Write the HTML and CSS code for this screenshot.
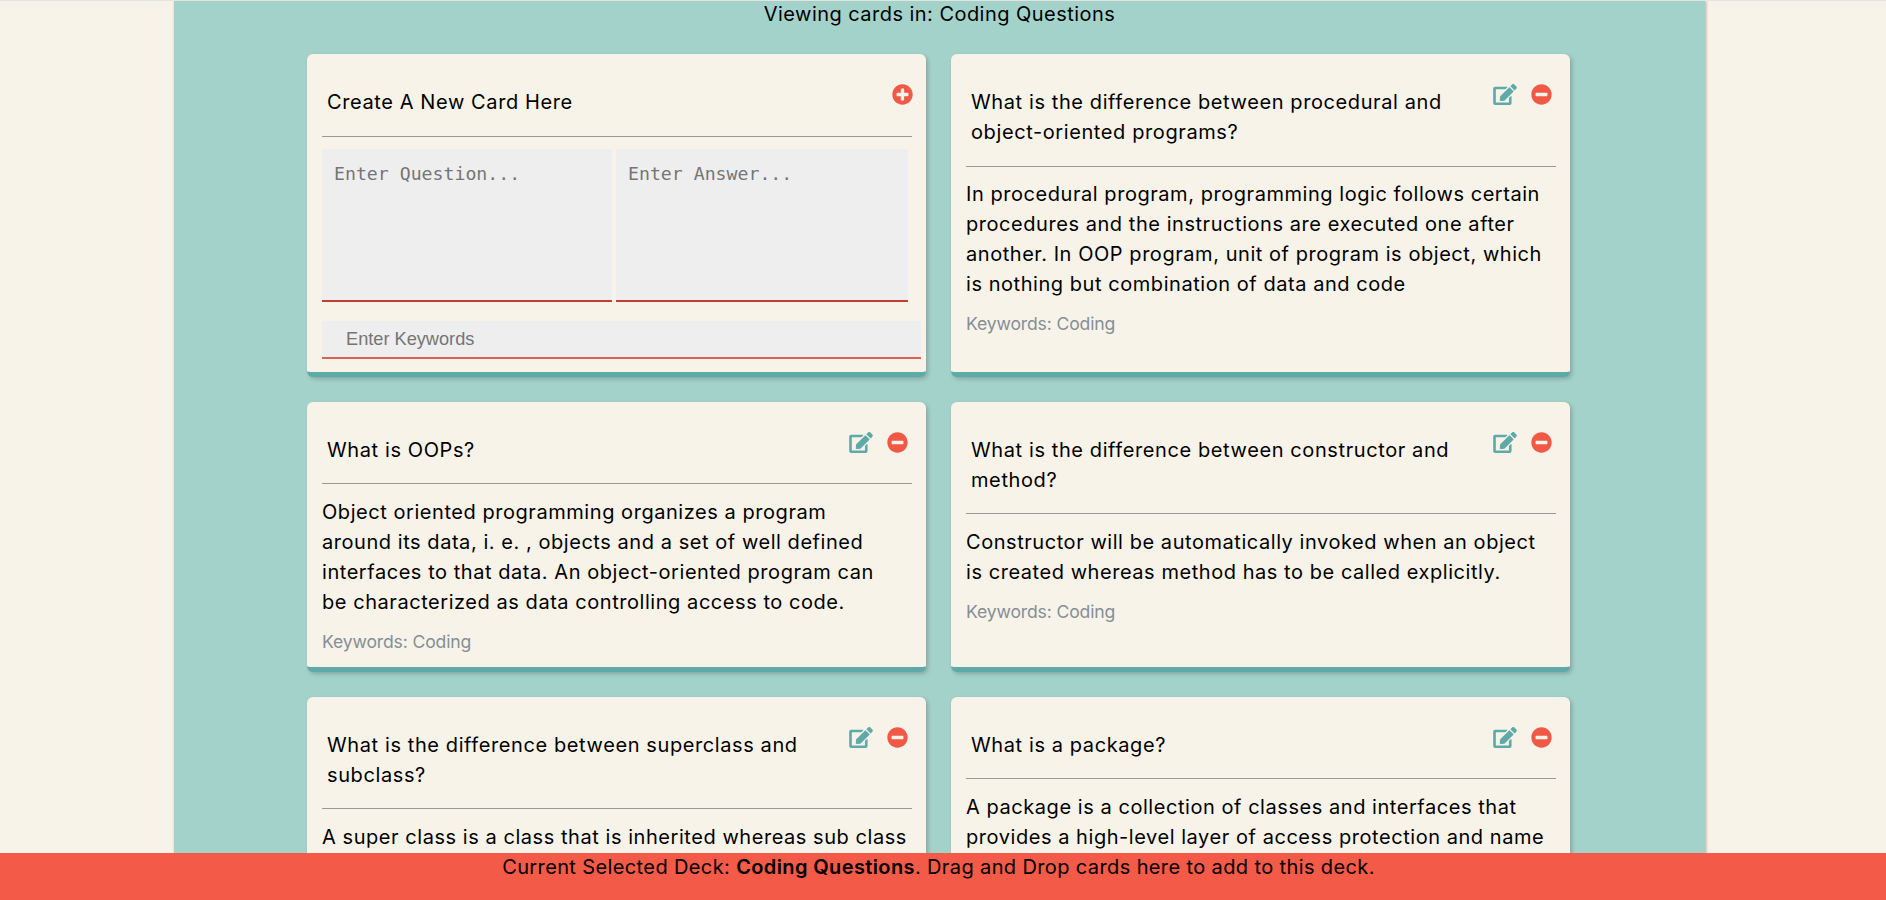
FILE: index.html
```html
<!DOCTYPE html>
<html lang="en">
<head>
    <meta charset="UTF-8">
    <meta name="viewport" content="width=device-width, initial-scale=1.0">
    <title>Flashcards</title>
    <link rel="stylesheet" href="styles.css">
</head>
<body>
    <svg class="icon-defs" width="0" height="0">
        <symbol id="icon-edit" viewBox="0 0 576 512"><path d="M402.6 83.2l90.2 90.2c3.8 3.8 3.8 10 0 13.8L274.4 405.6l-92.8 10.3c-12.4 1.4-22.9-9.1-21.5-21.5l10.3-92.8L388.8 83.2c3.8-3.8 10-3.8 13.8 0zm162-22.9l-48.8-48.8c-15.2-15.2-39.9-15.2-55.2 0l-35.4 35.4c-3.8 3.8-3.8 10 0 13.8l90.2 90.2c3.8 3.8 10 3.8 13.8 0l35.4-35.4c15.2-15.3 15.2-40 0-55.2zM384 346.2V448H64V128h229.8c3.2 0 6.2-1.3 8.5-3.5l40-40c7.6-7.6 2.2-20.5-8.5-20.5H48C21.5 64 0 85.5 0 112v352c0 26.5 21.5 48 48 48h352c26.5 0 48-21.5 48-48V306.2c0-10.7-12.9-16-20.5-8.5l-40 40c-2.2 2.3-3.5 5.3-3.5 8.5z"/></symbol>
        <symbol id="icon-minus" viewBox="0 0 512 512"><path d="M256 8C119 8 8 119 8 256s111 248 248 248 248-111 248-248S393 8 256 8zM124 296c-6.6 0-12-5.4-12-12v-56c0-6.6 5.4-12 12-12h264c6.6 0 12 5.4 12 12v56c0 6.6-5.4 12-12 12H124z"/></symbol>
        <symbol id="icon-plus" viewBox="0 0 512 512"><path d="M256 8C119 8 8 119 8 256s111 248 248 248 248-111 248-248S393 8 256 8zm144 276c0 6.6-5.4 12-12 12h-92v92c0 6.6-5.4 12-12 12h-56c-6.6 0-12-5.4-12-12v-92h-92c-6.6 0-12-5.4-12-12v-56c0-6.6 5.4-12 12-12h92v-92c0-6.6 5.4-12 12-12h56c6.6 0 12 5.4 12 12v92h92c6.6 0 12 5.4 12 12v56z"/></symbol>
    </svg>

    <main class="deck-view">
        <h2 class="deck-title">Viewing cards in: Coding Questions</h2>

        <div class="card-grid">
            <section class="card">
                <header class="card-head">
                    <h3 class="card-question">Create A New Card Here</h3>
                    <div class="card-actions card-actions-new">
                        <svg class="icon icon-red"><use href="#icon-plus"/></svg>
                    </div>
                </header>
                <form class="new-card">
                    <div class="new-card-fields">
                        <textarea class="new-card-area" placeholder="Enter Question..."></textarea>
                        <textarea class="new-card-area new-card-area-wide" placeholder="Enter Answer..."></textarea>
                    </div>
                    <input class="new-card-keywords" type="text" placeholder="Enter Keywords">
                </form>
            </section>

            <section class="card">
                <header class="card-head">
                    <h3 class="card-question">What is the difference between procedural and object-oriented programs?</h3>
                    <div class="card-actions">
                        <svg class="icon icon-edit"><use href="#icon-edit"/></svg>
                        <svg class="icon icon-red"><use href="#icon-minus"/></svg>
                    </div>
                </header>
                <p class="card-answer">In procedural program, programming logic follows certain<br>procedures and the instructions are executed one after<br>another. In OOP program, unit of program is object, which<br>is nothing but combination of data and code</p>
                <p class="card-keywords">Keywords: Coding</p>
            </section>

            <section class="card">
                <header class="card-head">
                    <h3 class="card-question">What is OOPs?</h3>
                    <div class="card-actions">
                        <svg class="icon icon-edit"><use href="#icon-edit"/></svg>
                        <svg class="icon icon-red"><use href="#icon-minus"/></svg>
                    </div>
                </header>
                <p class="card-answer">Object oriented programming organizes a program<br>around its data, i. e. , objects and a set of well defined<br>interfaces to that data. An object-oriented program can<br>be characterized as data controlling access to code.</p>
                <p class="card-keywords">Keywords: Coding</p>
            </section>

            <section class="card">
                <header class="card-head">
                    <h3 class="card-question">What is the difference between constructor and method?</h3>
                    <div class="card-actions">
                        <svg class="icon icon-edit"><use href="#icon-edit"/></svg>
                        <svg class="icon icon-red"><use href="#icon-minus"/></svg>
                    </div>
                </header>
                <p class="card-answer">Constructor will be automatically invoked when an object<br>is created whereas method has to be called explicitly.</p>
                <p class="card-keywords">Keywords: Coding</p>
            </section>

            <section class="card">
                <header class="card-head">
                    <h3 class="card-question">What is the difference between superclass and subclass?</h3>
                    <div class="card-actions">
                        <svg class="icon icon-edit"><use href="#icon-edit"/></svg>
                        <svg class="icon icon-red"><use href="#icon-minus"/></svg>
                    </div>
                </header>
                <p class="card-answer">A super class is a class that is inherited whereas sub class<br>is a class that inherits from the super class.</p>
                <p class="card-keywords">Keywords: Coding</p>
            </section>

            <section class="card">
                <header class="card-head">
                    <h3 class="card-question">What is a package?</h3>
                    <div class="card-actions">
                        <svg class="icon icon-edit"><use href="#icon-edit"/></svg>
                        <svg class="icon icon-red"><use href="#icon-minus"/></svg>
                    </div>
                </header>
                <p class="card-answer">A package is a collection of classes and interfaces that<br>provides a high-level layer of access protection and name<br>space management.</p>
                <p class="card-keywords">Keywords: Coding</p>
            </section>
        </div>
    </main>

    <footer class="deck-bar">Current Selected Deck: <strong>Coding Questions</strong>. Drag and Drop cards here to add to this deck.</footer>
</body>
</html>
```

FILE: styles.css
```css
html {
    overflow: hidden;
}

body {
    margin: 0;
    height: 100vh;
    overflow: hidden;
    background: #f7f3e9;
    border-top: 1px solid #e4e4e0;
    box-sizing: border-box;
    font-family: "Inter", "Open Sans", sans-serif;
    color: #000;
}

.icon-defs {
    position: absolute;
}

/* Teal column in the middle */
.deck-view {
    width: 1531px;
    min-height: 100%;
    margin-left: 174px;
    background: #a3d2ca;
    box-shadow: 1px 0 3px rgba(0, 0, 0, 0.3);
}

.deck-title {
    margin: 0;
    padding-bottom: 26px;
    font-size: 20px;
    font-weight: 400;
    line-height: 27px;
    letter-spacing: 0.46px;
    text-align: center;
}

.card-grid {
    display: grid;
    grid-template-columns: 619px 619px;
    column-gap: 25px;
    row-gap: 25px;
    margin-left: 133px;
    align-items: stretch;
}

.card {
    padding: 0 14px 0 15px;
    background: #f7f3e9;
    border-bottom: 5px solid #5eaaa8;
    border-radius: 6px;
    box-shadow: 2px 2px 4px rgba(0, 0, 0, 0.2);
}

.card-head {
    display: flex;
    justify-content: space-between;
    padding: 33px 4px 18px 5px;
    border-bottom: 1px solid #999;
}

/* top row sits a pixel lower under its rule */
.card:nth-child(-n+2) .card-head {
    padding-bottom: 19px;
}

.card:nth-child(-n+2) .card-answer {
    margin-top: 12px;
}

.card-question {
    margin: 0;
    width: 480px;
    font-size: 20px;
    font-weight: 400;
    line-height: 30px;
    letter-spacing: 0.6px;
}

.card-actions {
    display: flex;
    gap: 14px;
    margin-top: -3px;
}

.card-actions-new {
    margin-right: -5px;
}

.icon {
    display: block;
    height: 21px;
    width: 21px;
}

.icon-edit {
    width: 24px;
    fill: #5eaaa8;
}

.icon-red {
    fill: #f05945;
}

.card-answer {
    margin: 13px 0 0;
    font-size: 20px;
    line-height: 30px;
    letter-spacing: 0.55px;
    white-space: nowrap;
}

.card-keywords {
    margin: 12px 0;
    font-size: 17.6px;
    line-height: 26px;
    letter-spacing: -0.15px;
    color: #868e96;
}

/* New card form */
.new-card {
    padding: 12px 0 13px;
}

.new-card-fields {
    display: flex;
    gap: 4px;
}

.new-card-area {
    display: block;
    box-sizing: border-box;
    width: 290px;
    height: 153px;
    padding: 13px 12px;
    background: #eee;
    border: 0;
    border-bottom: 2px solid #c0402f;
    border-radius: 0;
    resize: none;
    font-family: "DejaVu Sans Mono", monospace;
    font-size: 18.2px;
    line-height: 24px;
}

.new-card-area-wide {
    width: 292px;
}

.new-card-keywords {
    display: block;
    box-sizing: border-box;
    width: 599px;
    height: 38px;
    margin-top: 19px;
    padding: 0 24px;
    background: #eee;
    border: 0;
    border-bottom: 2px solid #d9634f;
    border-radius: 0;
    font-family: "Liberation Sans", Arial, sans-serif;
    font-size: 18.2px;
}

/* Drop bar at the bottom */
.deck-bar {
    position: fixed;
    left: 0;
    right: 0;
    bottom: 0;
    height: 47px;
    padding-right: 9px;
    background: #f35a47;
    font-size: 20px;
    line-height: 28px;
    letter-spacing: 0.38px;
    text-align: center;
}

.deck-bar strong {
    font-weight: 600;
}
```
